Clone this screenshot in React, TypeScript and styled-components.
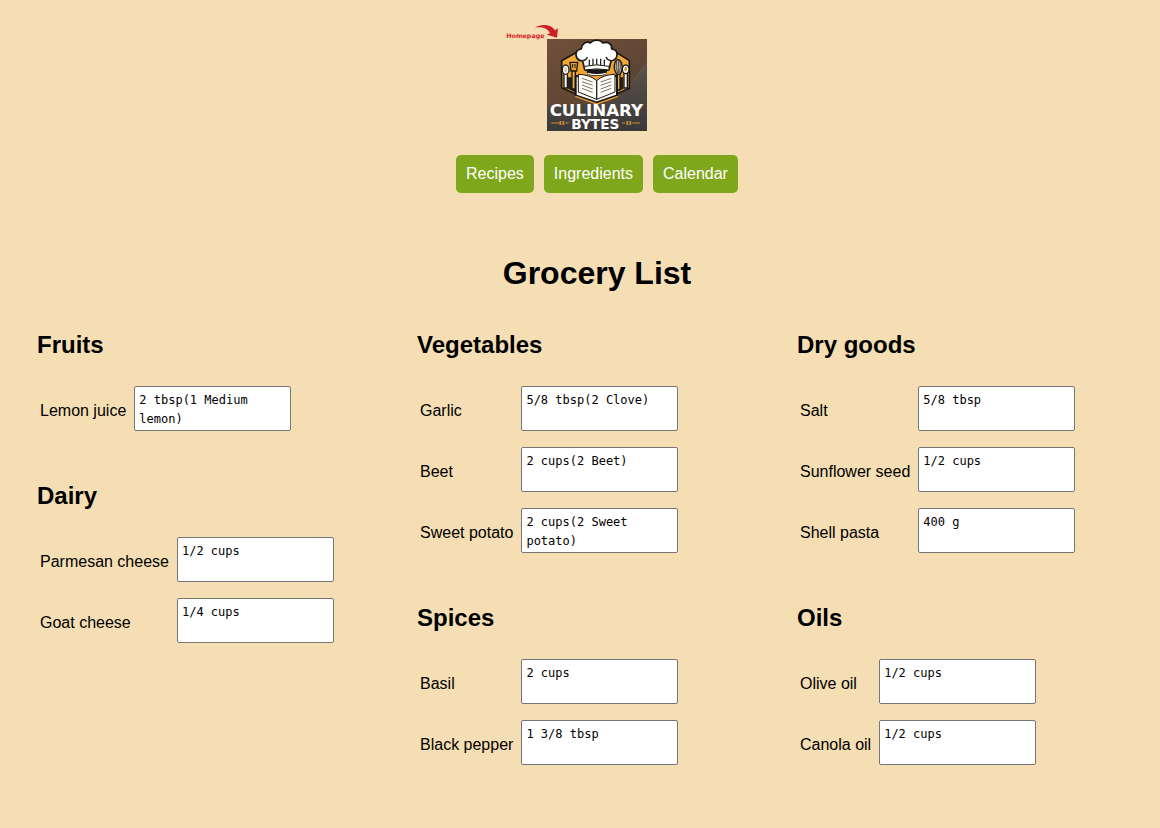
import React from "react";
import styled, { createGlobalStyle } from "styled-components";

const GlobalStyle = createGlobalStyle`
  * { box-sizing: border-box; }
  body {
    margin: 0;
    background: #f5deb3;
    color: #000;
    font-family: Arial, "Liberation Sans", sans-serif;
    font-size: 16px;
    line-height: 20px;
  }
`;

const Page = styled.div`
  padding: 20px 3px 40px 37px;
`;

const Header = styled.header`
  display: flex;
  flex-direction: column;
  align-items: center;
  gap: 24px;
`;

const HomeLink = styled.a`
  display: block;
  svg { display: block; overflow: visible; }
`;

const Nav = styled.nav`
  display: flex;
  gap: 10px;
`;

const NavLink = styled.a`
  padding: 9px 10px;
  border-radius: 5px;
  background: #7fa71b;
  color: #fff;
  text-decoration: none;
`;

const Title = styled.h1`
  margin: 60px 0 38px;
  font-size: 32px;
  line-height: 40px;
  text-align: center;
`;

const Columns = styled.main`
  display: grid;
  grid-template-columns: repeat(3, minmax(0, 1fr));
  gap: 20px;
`;

const Column = styled.div`
  display: flex;
  flex-direction: column;
  gap: 43px;
`;

const Heading = styled.h2`
  margin: 0 0 19px;
  font-size: 24px;
  line-height: 28px;
`;

const Items = styled.table`
  border-collapse: collapse;
`;

const NameCell = styled.td`
  padding: 4px 8px 0 3px;
  white-space: nowrap;
`;

const AmountCell = styled.td`
  padding: 8px 0;
`;

const Amount = styled.textarea`
  display: block;
  width: 157px;
  height: 45px;
  padding: 4px 4px 1px;
  border: 1px solid #767676;
  border-radius: 2px;
  background: #fff;
  color: #000;
  font-family: "DejaVu Sans Mono", monospace;
  font-size: 12px;
  line-height: 19px;
  resize: none;
  overflow: hidden;
`;

type Category = { name: string; items: [string, string][] };

const columns: Category[][] = [
  [
    { name: "Fruits", items: [["Lemon juice", "2 tbsp(1 Medium lemon)"]] },
    { name: "Dairy", items: [["Parmesan cheese", "1/2 cups"], ["Goat cheese", "1/4 cups"]] },
  ],
  [
    {
      name: "Vegetables",
      items: [["Garlic", "5/8 tbsp(2 Clove)"], ["Beet", "2 cups(2 Beet)"], ["Sweet potato", "2 cups(2 Sweet potato)"]],
    },
    { name: "Spices", items: [["Basil", "2 cups"], ["Black pepper", "1 3/8 tbsp"]] },
  ],
  [
    { name: "Dry goods", items: [["Salt", "5/8 tbsp"], ["Sunflower seed", "1/2 cups"], ["Shell pasta", "400 g"]] },
    { name: "Oils", items: [["Olive oil", "1/2 cups"], ["Canola oil", "1/2 cups"]] },
  ],
];

function Logo() {
  return (
    <svg width="182" height="111" viewBox="18 0 546 333" role="img" aria-label="Culinary Bytes homepage">
      <defs>
        <linearGradient id="board" x1="0" y1="0" x2="0.6" y2="1">
          <stop offset="0" stopColor="#705039" />
          <stop offset="0.5" stopColor="#644835" />
          <stop offset="1" stopColor="#4a4038" />
        </linearGradient>
        <linearGradient id="slate" x1="0" y1="0" x2="0" y2="1">
          <stop offset="0" stopColor="#5a5550" />
          <stop offset="1" stopColor="#36383a" />
        </linearGradient>
        <linearGradient id="gold" x1="0" y1="0" x2="0" y2="1">
          <stop offset="0" stopColor="#f5ae38" />
          <stop offset="1" stopColor="#e2922a" />
        </linearGradient>
      </defs>

      <text x="19" y="54" fontFamily="DejaVu Sans, sans-serif" fontWeight="700" fontSize="19" fill="#d8232a">Homepage</text>
      <path d="M104 23 C124 10 154 13 165 31 L174 25 L171 53 L141 44 L150 39 C142 24 124 19 104 23Z" fill="#cc1f27" />

      <rect x="141" y="57" width="300" height="276" fill="url(#board)" />
      <path d="M441 130 L386 206 L330 250 L141 262 V333 H441Z" fill="url(#slate)" opacity="0.8" />
      <path d="M441 128 L400 184 L386 198" fill="none" stroke="#80776e" strokeWidth="3" opacity="0.4" />

      <path d="M185 122 L238 92 H340 L388 122 V205 L289 250 L185 203Z" fill="url(#gold)" stroke="#191816" strokeWidth="5" strokeLinejoin="round" />
      <path d="M204 206 V172 H232 V220Z M344 220 V172 H370 V206Z" fill="#252019" />

      {/* spoon, spatula */}
      <g stroke="#1c1b19" strokeWidth="4">
        <path d="M192 160 V204 H202 V160Z" fill="#fff" />
        <ellipse cx="197" cy="149" rx="10" ry="14" fill="#fffdf5" />
        <path d="M216 152 V207 H226 V152Z" fill="#f3b344" />
        <path d="M210 127 H233 L230 153 H213Z" fill="#e59b30" />
        <path d="M218 132 V143 M225 132 V143" fill="none" strokeWidth="3" />
      </g>
      <ellipse cx="197" cy="149" rx="4" ry="8" fill="#c8c2b6" />

      {/* whisk, spoon */}
      <g stroke="#1c1b19" strokeWidth="4">
        <path d="M351 160 V209 H360 V160Z" fill="#f3b344" />
        <path d="M351 163 C337 146 343 121 354 118 C366 121 372 146 360 163Z" fill="#c8bca5" />
        <path d="M355 120 V160 M350 123 Q346 143 353 160 M360 123 Q364 143 357 160" fill="none" strokeWidth="2" />
        <path d="M372 160 V204 H382 V160Z" fill="#fff" />
        <ellipse cx="377" cy="148" rx="10" ry="13" fill="#fffdf5" />
      </g>
      <ellipse cx="377" cy="147" rx="4" ry="7" fill="#d29235" />

      {/* chef's hat */}
      <path
        d="M254 149 L248 123 C222 120 222 89 244 87 C246 68 262 63 271 69 C281 58 300 58 309 69 C325 63 337 74 335 87 C357 90 357 118 333 123 L327 149 Q290 158 254 149Z"
        fill="#fff" stroke="#171716" strokeWidth="5" strokeLinejoin="round"
      />
      <path d="M248 122 Q260 120 262 111 M333 122 Q321 120 318 111 M268 119 V137 M279 116 V136 M290 116 V136 M302 116 V136 M313 119 V137" fill="none" stroke="#252525" strokeWidth="4" />
      <path d="M254 139 Q290 130 327 139 V150 Q290 143 254 150Z" fill="#fff" stroke="#171716" strokeWidth="3" />
      <path d="M259 151 Q290 144 322 151 L318 164 Q290 172 263 164Z" fill="#161616" />
      <path d="M263 160 Q290 168 318 160" fill="none" stroke="#fff" strokeWidth="4" />

      {/* open cookbook */}
      <path d="M227 167 L290 188 L351 167 V226 L290 247 L227 226Z" fill="#fff" stroke="#171716" strokeWidth="6" strokeLinejoin="round" />
      <path d="M235 163 Q270 164 290 182 Q309 164 345 163 V216 L290 238 L235 216Z" fill="#fffdf5" stroke="#171716" strokeWidth="3" strokeLinejoin="round" />
      <path d="M290 182 V240" stroke="#292724" strokeWidth="4" />
      <path d="M246 175 L278 186 M246 185 L278 196 M246 195 L278 207 M246 205 L278 217 M302 186 L334 175 M302 196 L334 185 M302 207 L334 195 M302 217 L334 205" fill="none" stroke="#77736a" strokeWidth="3" />
      <path d="M226 229 L290 252 L354 229" fill="none" stroke="#e89e34" strokeWidth="4" />

      <g fill="#fff" fontFamily="DejaVu Sans, sans-serif" fontWeight="700" textAnchor="middle">
        <text x="289" y="288" fontSize="50">CULINARY</text>
        <text x="286" y="327" fontSize="41">BYTES</text>
      </g>
      <path d="M154 309 H178 M196 309 H206 M366 309 H375 M397 309 H420" stroke="#cf8e3a" strokeWidth="3" />
      <path d="M181 303 V315 M190 303 V315 M382 303 V315 M391 303 V315" stroke="#cf8e3a" strokeWidth="5" />
    </svg>
  );
}

function CategoryList({ category }: { category: Category }) {
  return (
    <section>
      <Heading>{category.name}</Heading>
      <Items>
        <tbody>
          {category.items.map(([name, amount]) => {
            const id = name.toLowerCase().replace(/ /g, "-");
            return (
              <tr key={id}>
                <NameCell><label htmlFor={id}>{name}</label></NameCell>
                <AmountCell><Amount id={id} defaultValue={amount} spellCheck={false} /></AmountCell>
              </tr>
            );
          })}
        </tbody>
      </Items>
    </section>
  );
}

export default function App() {
  return (
    <Page>
      <GlobalStyle />
      <Header>
        <HomeLink href="#home"><Logo /></HomeLink>
        <Nav>
          <NavLink href="#recipes">Recipes</NavLink>
          <NavLink href="#ingredients">Ingredients</NavLink>
          <NavLink href="#calendar">Calendar</NavLink>
        </Nav>
      </Header>
      <Title>Grocery List</Title>
      <Columns>
        {columns.map((categories, index) => (
          <Column key={index}>
            {categories.map((category) => <CategoryList key={category.name} category={category} />)}
          </Column>
        ))}
      </Columns>
    </Page>
  );
}
